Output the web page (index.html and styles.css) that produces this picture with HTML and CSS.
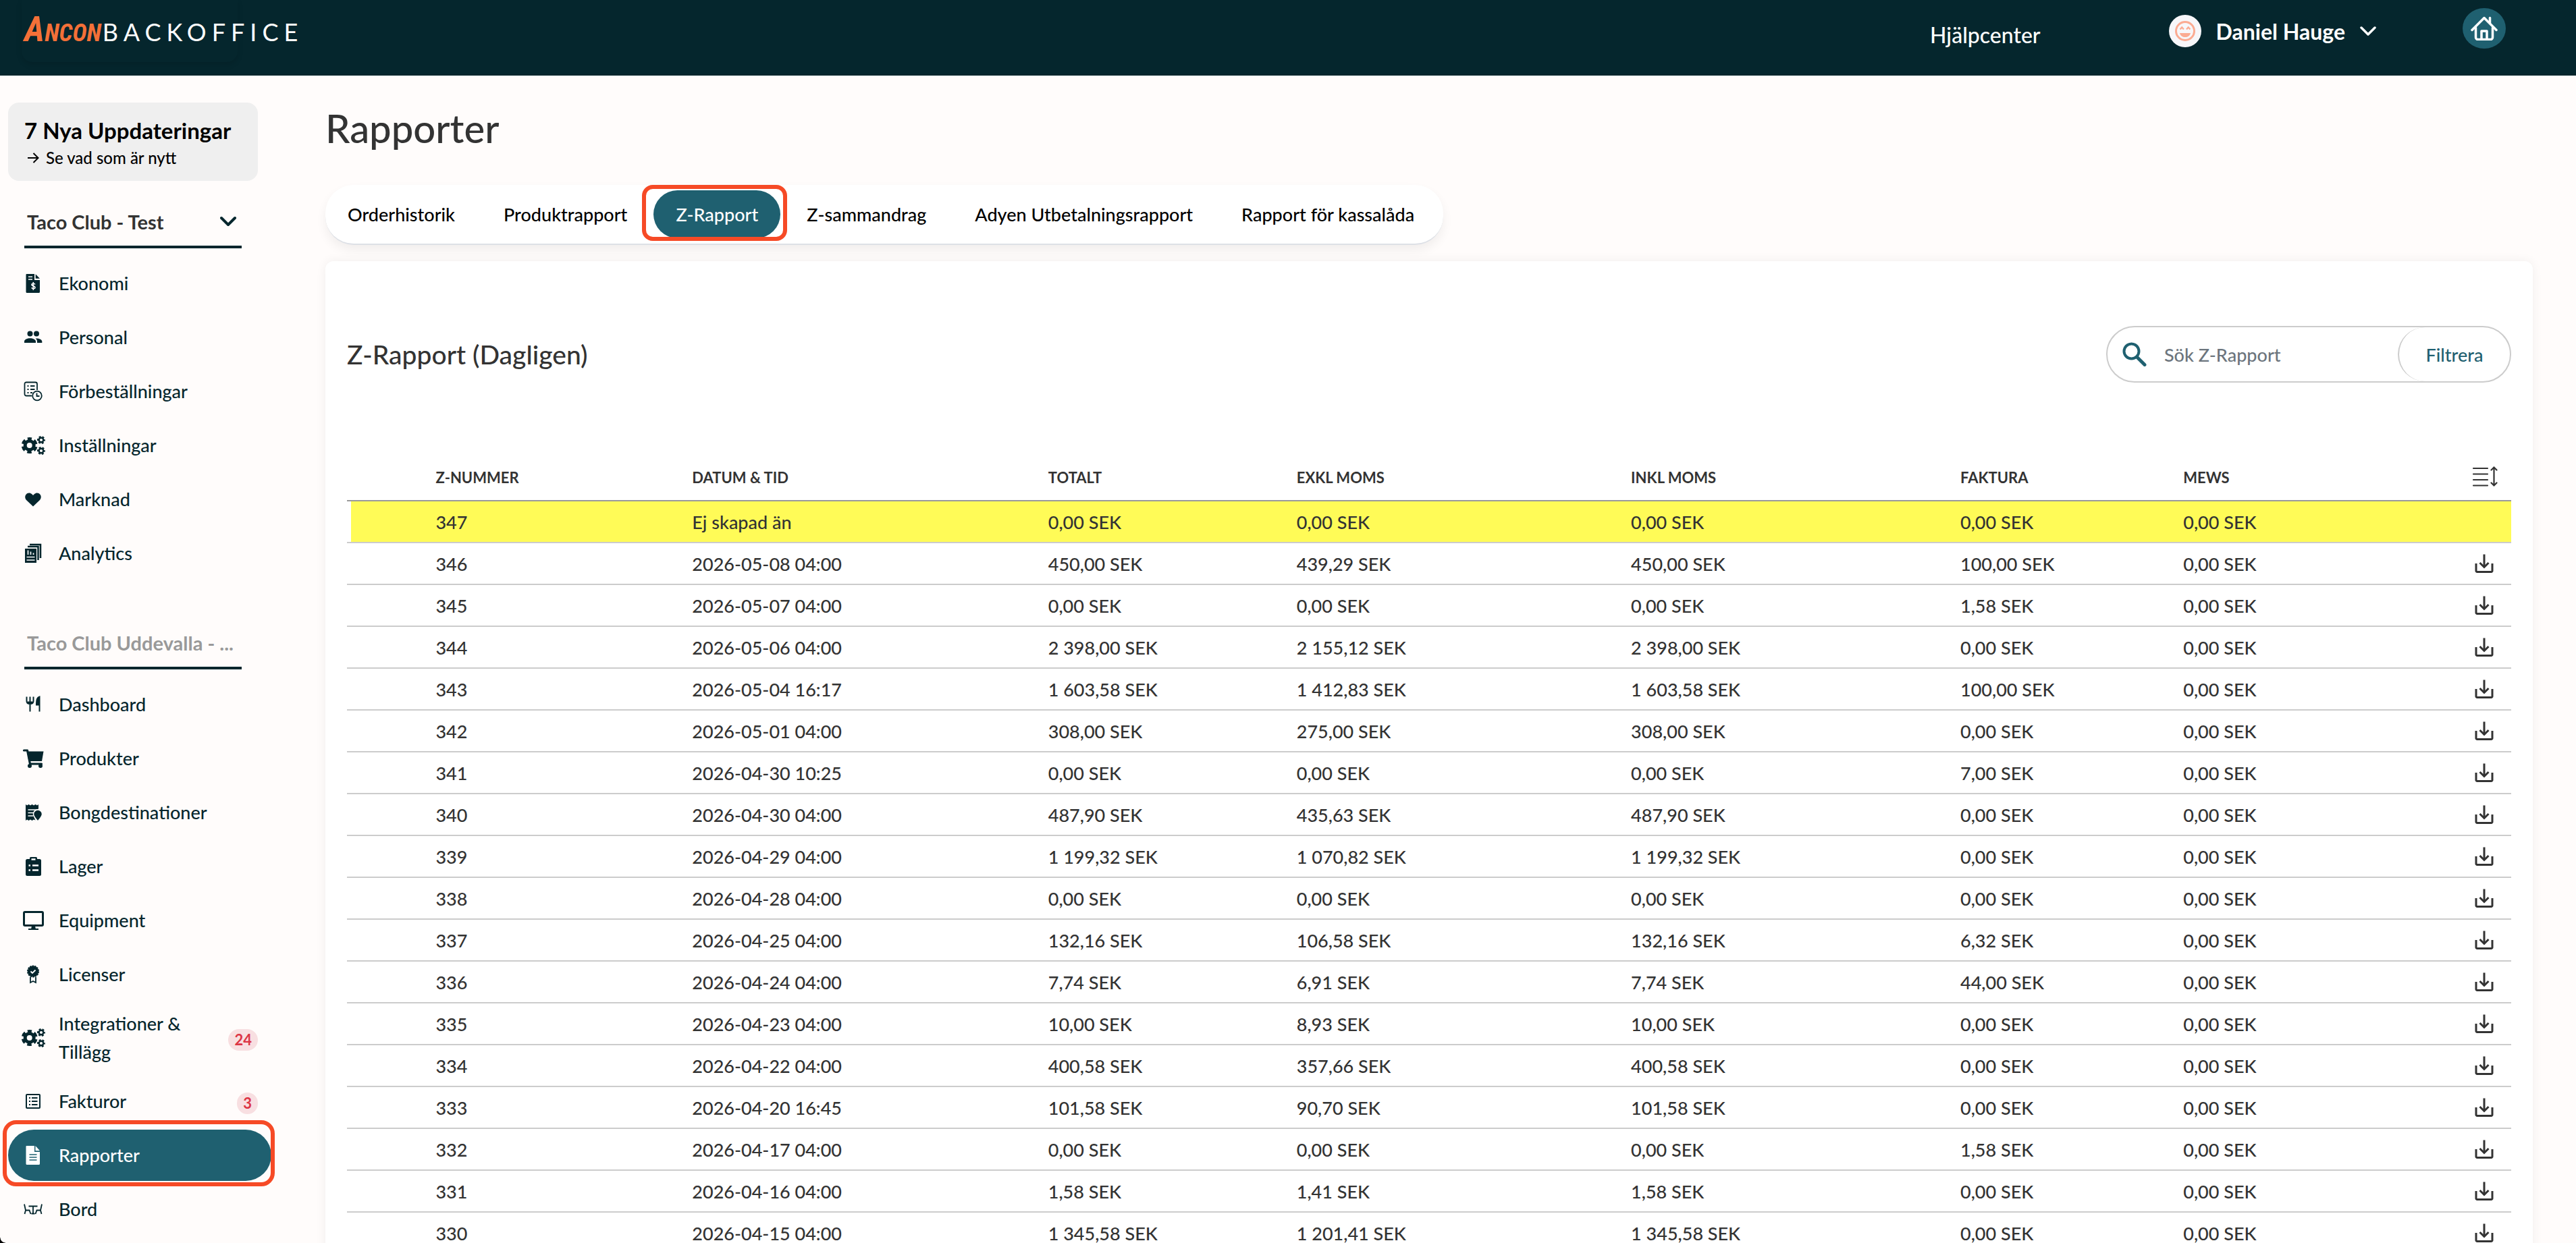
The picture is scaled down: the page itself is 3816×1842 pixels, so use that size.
FILE: index.html
```html
<!DOCTYPE html>
<html lang="sv">
<head>
<meta charset="utf-8">
<title>Rapporter - Ancon Backoffice</title>
<link rel="stylesheet" href="styles.css">
</head>
<body>

<!-- shared icons -->
<svg class="sprite" aria-hidden="true">
  <symbol id="gears" viewBox="0 0 36 28">
    <circle cx="12.7" cy="14" r="6.5" fill="none" stroke="currentColor" stroke-width="5"/>
    <circle cx="12.7" cy="14" r="10" fill="none" stroke="currentColor" stroke-width="4" stroke-dasharray="6.4 4.07" stroke-dashoffset="3.2" transform="rotate(-90 12.7 14)"/>
    <g fill="none" stroke="currentColor">
      <circle cx="30" cy="6" r="3.3" stroke-width="2.4"/>
      <circle cx="30" cy="6" r="5" stroke-width="2" stroke-dasharray="3 2.23" stroke-dashoffset="1.5"/>
      <circle cx="30" cy="22" r="3.3" stroke-width="2.4"/>
      <circle cx="30" cy="22" r="5" stroke-width="2" stroke-dasharray="3 2.23" stroke-dashoffset="1.5"/>
    </g>
  </symbol>
  <symbol id="download" viewBox="0 0 28 28">
    <g fill="none" stroke="currentColor" stroke-width="3">
      <path d="M14 .5V19"/>
      <path d="M7.5 13l6.5 6.5 6.5-6.5"/>
      <path d="M2 14v11a1.5 1.5 0 0 0 1.500 1.500h21a1.500 1.500 0 0 0 1.500-1.500V14"/>
    </g>
  </symbol>
</svg>

<header class="topbar">
  <a class="logo" href="#"><span class="logo-name"><span class="logo-initial">A</span>NCON</span><span class="logo-sub">BACKOFFICE</span></a>
  <a class="help" href="#">Hjälpcenter</a>
  <button class="user" type="button">
    <svg width="48" height="48" viewBox="0 0 48 48">
      <circle cx="24" cy="24" r="24" fill="#f7f7fa"/>
      <circle cx="24" cy="24" r="13.500" fill="none" stroke="#fbab92" stroke-width="3"/>
      <path d="M16.500 21.500l2.700-3 2.700 3M26 21.500l2.700-3 2.700 3" fill="none" stroke="#fbab92" stroke-width="2.200"/>
      <path d="M16 27h16c-1 4-4 6-8 6s-7-2-8-6z" fill="#fbab92"/>
    </svg>
    <span>Daniel Hauge</span>
    <svg width="24" height="16" viewBox="0 0 24 16"><path d="M2 3l10 10L22 3" fill="none" stroke="#fff" stroke-width="3.500" stroke-linecap="round" stroke-linejoin="round"/></svg>
  </button>
  <a class="home" href="#" aria-label="Hem">
    <svg width="40" height="36" viewBox="0 0 40 36" fill="none" stroke="#fff" stroke-width="3.500" stroke-linecap="round" stroke-linejoin="round">
      <path d="M2 20.500L20 2.500l18 18"/>
      <path d="M28.500 10V2.500"/>
      <path d="M7.500 17v14.500a3 3 0 0 0 3 3h19a3 3 0 0 0 3-3V17"/>
      <path d="M16 34V22h8v12"/>
    </svg>
  </a>
</header>

<div class="page">
<aside class="sidebar">
  <a class="news" href="#">
    <strong>7 Nya Uppdateringar</strong>
    <span><svg width="18" height="16" viewBox="0 0 18 16" fill="none" stroke="currentColor" stroke-width="2"><path d="M1 8h15M9.500 1l7 7-7 7"/></svg>Se vad som är nytt</span>
  </a>

  <button class="picker" type="button">
    <span>Taco Club - Test</span>
    <svg width="24" height="16" viewBox="0 0 24 16"><path d="M2 3l10 10L22 3" fill="none" stroke="currentColor" stroke-width="4" stroke-linecap="round" stroke-linejoin="round"/></svg>
  </button>
  <nav class="menu">
    <a href="#">
      <svg width="36" height="30" viewBox="0 0 36 30">
        <path d="M8.500 1H20v9h8v17.500a1.500 1.500 0 0 1-1.500 1.500h-17A1.500 1.500 0 0 1 7.500 27.500V2a1 1 0 0 1 1-1z" fill="currentColor"/>
        <path d="M21.700 1.200l6.300 6.600h-6.300z" fill="currentColor"/>
        <path d="M11 5.300h6M11 9h6M21 16.500c-1-2-5.500-1.500-5 .8.500 2 5 1.200 5 3.600 0 2.200-4.500 2.300-5.200.3M18.300 13v12" fill="none" stroke="#fff" stroke-width="1.600"/>
      </svg><span>Ekonomi</span></a>
    <a href="#">
      <svg width="36" height="30" viewBox="0 0 36 30" fill="currentColor">
        <circle cx="13.500" cy="9.500" r="4"/><circle cx="23" cy="9.500" r="4"/>
        <path d="M5 23v-2c0-3 4.500-4.700 8.500-4.700s8.500 1.700 8.500 4.700v2zM24 23v-2c0-2-1-3.300-2.300-4.500 4.500-.4 9.600 1.300 9.600 4.500v2z"/>
      </svg><span>Personal</span></a>
    <a href="#">
      <svg width="36" height="30" viewBox="0 0 36 30" fill="none" stroke="currentColor" stroke-width="1.800">
        <path d="M16 21.500H8a2.500 2.500 0 0 1-2.500-2.500V4A2.500 2.500 0 0 1 8 1.500h13.500A2.500 2.500 0 0 1 24 4v9"/>
        <path d="M9.500 7h2M14 7h6.500M9.500 12h2M14 12h6.500M9.500 17h2M14 17h3"/>
        <circle cx="24" cy="21.500" r="6.800"/><path d="M23.500 17.500v4.500h4"/>
      </svg><span>Förbeställningar</span></a>
    <a href="#"><svg width="36" height="28"><use href="#gears"/></svg><span>Inställningar</span></a>
    <a href="#">
      <svg width="36" height="30" viewBox="0 0 36 30"><path d="M18 25.500L8.500 16.500c-2.600-2.500-3-6.300-.9-8.800 2.200-2.700 6-2.800 8.400-.6l2 1.900 2-1.900c2.400-2.200 6.200-2.100 8.400.6 2.100 2.500 1.700 6.300-.9 8.800z" fill="currentColor"/></svg><span>Marknad</span></a>
    <a href="#">
      <svg width="36" height="30" viewBox="0 0 36 30">
        <path d="M13 2h16v20" fill="none" stroke="currentColor" stroke-width="2.500"/>
        <path d="M10 5h15.500v20" fill="none" stroke="currentColor" stroke-width="2.500"/>
        <rect x="6" y="8" width="17" height="21" fill="currentColor"/>
        <path d="M10.500 10.500v6.500M14.500 12.500v4.500M18.500 14.500v2.500M8.500 20.500h12M8.500 25h12" stroke="#fff" stroke-width="1.700"/>
      </svg><span>Analytics</span></a>
  </nav>

  <button class="picker picker-muted" type="button"><span>Taco Club Uddevalla - ...</span></button>
  <nav class="menu">
    <a href="#">
      <svg width="36" height="30" viewBox="0 0 36 30" fill="none" stroke="currentColor" stroke-width="2">
        <path d="M8.500 3.500v6.500c0 2.500 2 4 5 4s5-1.500 5-4V3.500M13.500 3.500v22"/><path d="M9.500 10.500h8v3h-8z" fill="currentColor" stroke="none"/>
        <path d="M27.500 3.500c-3.500 1-4.500 4-4.500 12h4.500zM27.500 3.500v22" fill="currentColor"/>
      </svg><span>Dashboard</span></a>
    <a href="#">
      <svg width="36" height="30" viewBox="0 0 36 30">
        <path d="M9 4.500h24.500L31 19H11.500z" fill="currentColor"/>
        <path d="M4.500 3h5l4 20h17" fill="none" stroke="currentColor" stroke-width="3.200" stroke-linecap="round" stroke-linejoin="round"/>
        <circle cx="13" cy="26" r="3" fill="currentColor"/><circle cx="29" cy="26" r="3" fill="currentColor"/>
      </svg><span>Produkter</span></a>
    <a href="#">
      <svg width="36" height="30" viewBox="0 0 36 30">
        <path d="M7 3l2 1.500L11.500 3 14 4.500 16.500 3 19 4.500 21.500 3 24 4.500 26 3v6.500l-7 3.500v8l2.500 5.500-2.500-1-2.500 1.500-2.500-1.500-2.500 1.500L9 25.500 7 27z" fill="currentColor"/>
        <path d="M10.500 11h15M10.500 15.500h8M10.500 20h8" stroke="#fff" stroke-width="1.700"/>
        <path d="M25 28c-3-4-6.500-7-6.500-10.500a6.500 6.500 0 0 1 13 0c0 3.500-3.500 6.500-6.500 10.500z" fill="currentColor" stroke="#fffcfb" stroke-width="1.500"/>
      </svg><span>Bongdestinationer</span></a>
    <a href="#">
      <svg width="36" height="30" viewBox="0 0 36 30">
        <rect x="7" y="4" width="23" height="25" rx="2.500" fill="currentColor"/><rect x="13" y="1" width="11" height="7" rx="1.500" fill="currentColor"/>
        <path d="M15.500 4.500h6M11.500 13.500h2.500M17 13.500h9M11.500 20.500h2.500M17 20.500h9" stroke="#fff" stroke-width="2.400"/>
      </svg><span>Lager</span></a>
    <a href="#">
      <svg width="36" height="30" viewBox="0 0 36 30" fill="none" stroke="currentColor" stroke-width="3">
        <rect x="4.500" y="2.500" width="28" height="20" rx="1.500"/><path d="M16 23h5l1 5h-7z" fill="currentColor" stroke="none"/><path d="M11 28h15" stroke-width="2"/>
      </svg><span>Equipment</span></a>
    <a href="#">
      <svg width="36" height="30" viewBox="0 0 36 30" fill="none" stroke="currentColor">
        <circle cx="18" cy="10.500" r="8" fill="currentColor" stroke-width="2" stroke-dasharray="2.500 1.100"/>
        <path d="M14.500 10.500l2.500 2.500 4.500-4.500" stroke="#fff" stroke-width="1.800"/>
        <path d="M14 19v8l4-2 4 2v-8" stroke-width="1.800"/>
      </svg><span>Licenser</span></a>
    <a href="#"><svg width="36" height="28"><use href="#gears"/></svg><span>Integrationer &amp; Tillägg</span><em class="count">24</em></a>
    <a href="#">
      <svg width="36" height="30" viewBox="0 0 36 30" fill="none" stroke="currentColor" stroke-width="2">
        <rect x="8" y="5" width="20" height="20" rx="1"/><path d="M12 10h2M16 10h8.500M12 15h2M16 15h8.500M12 20h2M16 20h8.500"/>
      </svg><span>Fakturor</span><em class="count">3</em></a>
    <a href="#" class="active marked">
      <svg width="36" height="30" viewBox="0 0 36 30">
        <path d="M8.500 1H20v9h8v17.500a1.500 1.500 0 0 1-1.500 1.500h-17A1.500 1.500 0 0 1 7.500 27.500V2a1 1 0 0 1 1-1zM21.500 1l6.500 7.300h-6.500z" fill="currentColor"/>
        <path d="M12.500 14h11M12.500 18h11M12.500 22h11" stroke="#1f6070" stroke-width="1.600"/>
      </svg><span>Rapporter</span></a>
    <a href="#">
      <svg width="36" height="30" viewBox="0 0 36 30" fill="none" stroke="currentColor" stroke-width="1.800">
        <path d="M5 7.500l2 9h5.500l2 5.500M7 16.500L5.500 22M31 7.500l-2 9h-5.500l-2 5.500M29 16.500l1.500 5.500M11.500 10.500h13M18 10.500V22M15.500 21.500h5"/>
      </svg><span>Bord</span></a>
  </nav>
</aside>

<main class="content">
  <h1>Rapporter</h1>
  <nav class="tabs">
    <a href="#">Orderhistorik</a>
    <a href="#">Produktrapport</a>
    <a href="#" class="active marked">Z-Rapport</a>
    <a href="#">Z-sammandrag</a>
    <a href="#">Adyen Utbetalningsrapport</a>
    <a href="#">Rapport för kassalåda</a>
  </nav>

  <section class="card">
    <div class="card-head">
      <h2>Z-Rapport (Dagligen)</h2>
      <form class="search">
        <label for="q" aria-label="Sök">
          <svg width="36" height="36" viewBox="0 0 36 36" fill="none" stroke="#1f6070" stroke-width="4" stroke-linecap="round"><circle cx="13.500" cy="13.500" r="11"/><path d="M23 23.500l10 10" stroke-width="5"/></svg>
        </label>
        <input id="q" type="text" placeholder="Sök Z-Rapport">
        <button type="button">Filtrera</button>
      </form>
    </div>

    <table class="report">
      <colgroup>
        <col class="c-pad"><col class="c-nr"><col class="c-date"><col class="c-total"><col class="c-excl"><col class="c-incl"><col class="c-inv"><col class="c-mews"><col class="c-act">
      </colgroup>
      <thead>
        <tr><th></th><th>Z-NUMMER</th><th>DATUM &amp; TID</th><th>TOTALT</th><th>EXKL MOMS</th><th>INKL MOMS</th><th>FAKTURA</th><th>MEWS</th>
        <th class="act"><button type="button" aria-label="Sortera"><svg width="38" height="32" viewBox="0 0 38 32" fill="none" stroke="currentColor" stroke-width="2.200" stroke-linecap="round"><path d="M2 4h21M2 12.500h21M2 21h21M2 29.500h21M32.500 3v26M28.500 6.500l4-4 4 4M28.500 25.500l4 4 4-4"/></svg></button></th></tr>
      </thead>
      <tbody>
        <tr class="open"><td></td><td>347</td><td>Ej skapad än</td><td>0,00 SEK</td><td>0,00 SEK</td><td>0,00 SEK</td><td>0,00 SEK</td><td>0,00 SEK</td><td></td></tr>
        <tr><td></td><td>346</td><td>2026-05-08 04:00</td><td>450,00 SEK</td><td>439,29 SEK</td><td>450,00 SEK</td><td>100,00 SEK</td><td>0,00 SEK</td><td class="act"><button type="button" aria-label="Ladda ner"><svg width="28" height="28"><use href="#download"/></svg></button></td></tr>
        <tr><td></td><td>345</td><td>2026-05-07 04:00</td><td>0,00 SEK</td><td>0,00 SEK</td><td>0,00 SEK</td><td>1,58 SEK</td><td>0,00 SEK</td><td class="act"><button type="button" aria-label="Ladda ner"><svg width="28" height="28"><use href="#download"/></svg></button></td></tr>
        <tr><td></td><td>344</td><td>2026-05-06 04:00</td><td>2 398,00 SEK</td><td>2 155,12 SEK</td><td>2 398,00 SEK</td><td>0,00 SEK</td><td>0,00 SEK</td><td class="act"><button type="button" aria-label="Ladda ner"><svg width="28" height="28"><use href="#download"/></svg></button></td></tr>
        <tr><td></td><td>343</td><td>2026-05-04 16:17</td><td>1 603,58 SEK</td><td>1 412,83 SEK</td><td>1 603,58 SEK</td><td>100,00 SEK</td><td>0,00 SEK</td><td class="act"><button type="button" aria-label="Ladda ner"><svg width="28" height="28"><use href="#download"/></svg></button></td></tr>
        <tr><td></td><td>342</td><td>2026-05-01 04:00</td><td>308,00 SEK</td><td>275,00 SEK</td><td>308,00 SEK</td><td>0,00 SEK</td><td>0,00 SEK</td><td class="act"><button type="button" aria-label="Ladda ner"><svg width="28" height="28"><use href="#download"/></svg></button></td></tr>
        <tr><td></td><td>341</td><td>2026-04-30 10:25</td><td>0,00 SEK</td><td>0,00 SEK</td><td>0,00 SEK</td><td>7,00 SEK</td><td>0,00 SEK</td><td class="act"><button type="button" aria-label="Ladda ner"><svg width="28" height="28"><use href="#download"/></svg></button></td></tr>
        <tr><td></td><td>340</td><td>2026-04-30 04:00</td><td>487,90 SEK</td><td>435,63 SEK</td><td>487,90 SEK</td><td>0,00 SEK</td><td>0,00 SEK</td><td class="act"><button type="button" aria-label="Ladda ner"><svg width="28" height="28"><use href="#download"/></svg></button></td></tr>
        <tr><td></td><td>339</td><td>2026-04-29 04:00</td><td>1 199,32 SEK</td><td>1 070,82 SEK</td><td>1 199,32 SEK</td><td>0,00 SEK</td><td>0,00 SEK</td><td class="act"><button type="button" aria-label="Ladda ner"><svg width="28" height="28"><use href="#download"/></svg></button></td></tr>
        <tr><td></td><td>338</td><td>2026-04-28 04:00</td><td>0,00 SEK</td><td>0,00 SEK</td><td>0,00 SEK</td><td>0,00 SEK</td><td>0,00 SEK</td><td class="act"><button type="button" aria-label="Ladda ner"><svg width="28" height="28"><use href="#download"/></svg></button></td></tr>
        <tr><td></td><td>337</td><td>2026-04-25 04:00</td><td>132,16 SEK</td><td>106,58 SEK</td><td>132,16 SEK</td><td>6,32 SEK</td><td>0,00 SEK</td><td class="act"><button type="button" aria-label="Ladda ner"><svg width="28" height="28"><use href="#download"/></svg></button></td></tr>
        <tr><td></td><td>336</td><td>2026-04-24 04:00</td><td>7,74 SEK</td><td>6,91 SEK</td><td>7,74 SEK</td><td>44,00 SEK</td><td>0,00 SEK</td><td class="act"><button type="button" aria-label="Ladda ner"><svg width="28" height="28"><use href="#download"/></svg></button></td></tr>
        <tr><td></td><td>335</td><td>2026-04-23 04:00</td><td>10,00 SEK</td><td>8,93 SEK</td><td>10,00 SEK</td><td>0,00 SEK</td><td>0,00 SEK</td><td class="act"><button type="button" aria-label="Ladda ner"><svg width="28" height="28"><use href="#download"/></svg></button></td></tr>
        <tr><td></td><td>334</td><td>2026-04-22 04:00</td><td>400,58 SEK</td><td>357,66 SEK</td><td>400,58 SEK</td><td>0,00 SEK</td><td>0,00 SEK</td><td class="act"><button type="button" aria-label="Ladda ner"><svg width="28" height="28"><use href="#download"/></svg></button></td></tr>
        <tr><td></td><td>333</td><td>2026-04-20 16:45</td><td>101,58 SEK</td><td>90,70 SEK</td><td>101,58 SEK</td><td>0,00 SEK</td><td>0,00 SEK</td><td class="act"><button type="button" aria-label="Ladda ner"><svg width="28" height="28"><use href="#download"/></svg></button></td></tr>
        <tr><td></td><td>332</td><td>2026-04-17 04:00</td><td>0,00 SEK</td><td>0,00 SEK</td><td>0,00 SEK</td><td>1,58 SEK</td><td>0,00 SEK</td><td class="act"><button type="button" aria-label="Ladda ner"><svg width="28" height="28"><use href="#download"/></svg></button></td></tr>
        <tr><td></td><td>331</td><td>2026-04-16 04:00</td><td>1,58 SEK</td><td>1,41 SEK</td><td>1,58 SEK</td><td>0,00 SEK</td><td>0,00 SEK</td><td class="act"><button type="button" aria-label="Ladda ner"><svg width="28" height="28"><use href="#download"/></svg></button></td></tr>
        <tr><td></td><td>330</td><td>2026-04-15 04:00</td><td>1 345,58 SEK</td><td>1 201,41 SEK</td><td>1 345,58 SEK</td><td>0,00 SEK</td><td>0,00 SEK</td><td class="act"><button type="button" aria-label="Ladda ner"><svg width="28" height="28"><use href="#download"/></svg></button></td></tr>
      </tbody>
    </table>
  </section>
</main>
</div>

<div class="corner"></div>
</body>
</html>
```
FILE: styles.css
```css
* { box-sizing: border-box; }
body {
  margin: 0;
  height: 100vh;
  overflow: hidden;
  display: flex;
  flex-direction: column;
  background: #fffcfb;
  color: #333;
  font-family: Lato, "Open Sans", sans-serif;
  font-size: 27px;
  font-weight: 500;
}
a { color: inherit; text-decoration: none; }
button, input { font: inherit; color: inherit; border: 0; background: none; padding: 0; }
svg { display: block; flex: none; }
.sprite { position: absolute; width: 0; height: 0; }

/* top bar */
.topbar {
  flex: none;
  display: flex;
  align-items: flex-start;
  height: 112px;
  padding: 0 104px 0 32px;
  background: #05262d;
  color: #fff;
}
.logo {
  display: flex;
  align-items: baseline;
  width: 320px;
  height: 92px;
  padding: 18px 0 0 4px;
  gap: 2px;
  border-radius: 0 0 16px 16px;
  box-shadow: 0 4px 8px rgba(0,0,0,.12);
  white-space: nowrap;
}
.logo-name {
  color: #f47038;
  font-family: "Liberation Sans Narrow", "Roboto Condensed", "DejaVu Sans Condensed", sans-serif;
  font-size: 36px;
  font-weight: bold;
  font-style: italic;
}
.logo-initial { font-size: 52px; line-height: 1; }
.logo-sub { font-size: 36px; font-weight: 400; letter-spacing: 8px; }
.help { margin-left: auto; padding-top: 32px; font-size: 32px; line-height: 40px; }
.user {
  display: flex;
  align-items: center;
  gap: 22px;
  margin: 22px 128px 0 190px;
  font-size: 32px;
  font-weight: bold;
}
.home {
  display: flex;
  align-items: center;
  justify-content: center;
  width: 64px;
  height: 60px;
  margin-top: 12px;
  border-radius: 50%;
  background: #1f6070;
}

/* sidebar */
.page { flex: 1; display: flex; min-height: 0; }
.sidebar {
  flex: none;
  width: 482px;
  padding: 40px 80px 0 12px;
  color: #05262d;
}
.news {
  display: block;
  width: 370px;
  height: 116px;
  padding: 20px 24px;
  border-radius: 16px;
  background: #efefef;
  color: #000;
}
.news strong { display: block; font-size: 33px; line-height: 42px; }
.news span { display: flex; align-items: center; gap: 10px; padding-left: 4px; font-size: 24px; line-height: 40px; }
.picker {
  display: flex;
  align-items: center;
  justify-content: space-between;
  width: 322px;
  height: 80px;
  margin: 20px 24px 12px;
  padding: 4px 8px 0 4px;
  border-bottom: 4px solid #05262d;
  font-size: 29px;
  font-weight: bold;
}
.picker span { white-space: nowrap; color: #333; }
.picker-muted { margin-top: 52px; }
.picker-muted span { color: #999; }
.menu { display: flex; flex-direction: column; gap: 4px; padding: 2px 0; }
.menu a {
  position: relative;
  display: flex;
  align-items: center;
  gap: 20px;
  min-height: 76px;
  padding: 10px 20px 10px 19px;
  border-radius: 38px;
  line-height: 42px;
}
.menu .active { background: #1f6070; color: #fff; }
.count {
  margin: 6px 0 0 auto;
  padding: 0 9px;
  border-radius: 16px;
  background: #f8dfe1;
  color: #dc3545;
  font-size: 22px;
  font-style: normal;
  font-weight: bold;
  line-height: 32px;
}

/* hand drawn red frame round the active entries */
.marked::after {
  content: "";
  position: absolute;
  inset: -14px -5px -8px -8px;
  border: 6px solid #f64a26;
  border-radius: 20px;
}

/* content */
.content { flex: 1; min-width: 0; padding: 40px 64px 0 0; }
h1 { margin: 0 0 46px; font-size: 58px; font-weight: 500; line-height: 76px; }
h2 { margin: 0; font-size: 39px; font-weight: 500; }
.tabs {
  display: flex;
  gap: 6px;
  width: max-content;
  height: 89px;
  padding: 8px 10px 8px 0;
  border-bottom: 2px solid #dde0e6;
  border-radius: 42px;
  background: #fff;
  color: #000;
  box-shadow: 0 8px 16px rgba(0,0,0,.06);
}
.tabs a { position: relative; padding: 0 33px; border-radius: 36px; line-height: 72px; }
.tabs .active { background: #1f6070; color: #fff; }
.tabs .marked::after { inset: -8px -10px -4px -17px; border-radius: 16px; }
.card {
  min-height: 1500px;
  margin-top: 24px;
  padding: 96px 32px 0;
  border-radius: 12px;
  background: #fff;
  box-shadow: 0 0 16px rgba(0,0,0,.06);
}
.card-head { display: flex; align-items: center; justify-content: space-between; }
.search {
  display: flex;
  align-items: center;
  width: 600px;
  height: 84px;
  border: 2px solid #ccc;
  border-radius: 42px;
}
.search label { padding: 0 26px 0 22px; }
.search input { flex: 1; min-width: 0; outline: 0; }
.search input::placeholder { color: #6c757d; opacity: 1; }
.search button {
  align-self: stretch;
  width: 166px;
  border-left: 2px solid #ccc;
  border-radius: 42px;
  color: #1f6070;
}

/* report table */
.report { width: 100%; margin-top: 92px; table-layout: fixed; border-collapse: separate; border-spacing: 0; }
.c-pad { width: 4.1%; }
.c-nr { width: 11.85%; }
.c-date { width: 16.45%; }
.c-total { width: 11.48%; }
.c-excl { width: 15.45%; }
.c-incl { width: 15.22%; }
.c-inv { width: 10.3%; }
.c-mews { width: 7%; }
th, td { padding: 0; text-align: left; white-space: nowrap; }
th { height: 84px; padding-bottom: 11px; border-bottom: 2px solid #999; font-size: 22px; }
th { vertical-align: bottom; line-height: 44px; }
td { height: 62px; border-bottom: 2px solid #ccc; }
.open td { background: #fffb57; }
.open td:first-child { box-shadow: inset 6px 0 #fff; }
.act button { display: block; margin-left: auto; margin-right: 26px; }
th.act button { margin-right: 20px; margin-bottom: 8px; }

/* rounded screen corner */
.corner {
  position: absolute;
  left: 0;
  bottom: 0;
  width: 8px;
  height: 8px;
  background: radial-gradient(circle at 100% 0, transparent 7px, #000 8px);
}
```
